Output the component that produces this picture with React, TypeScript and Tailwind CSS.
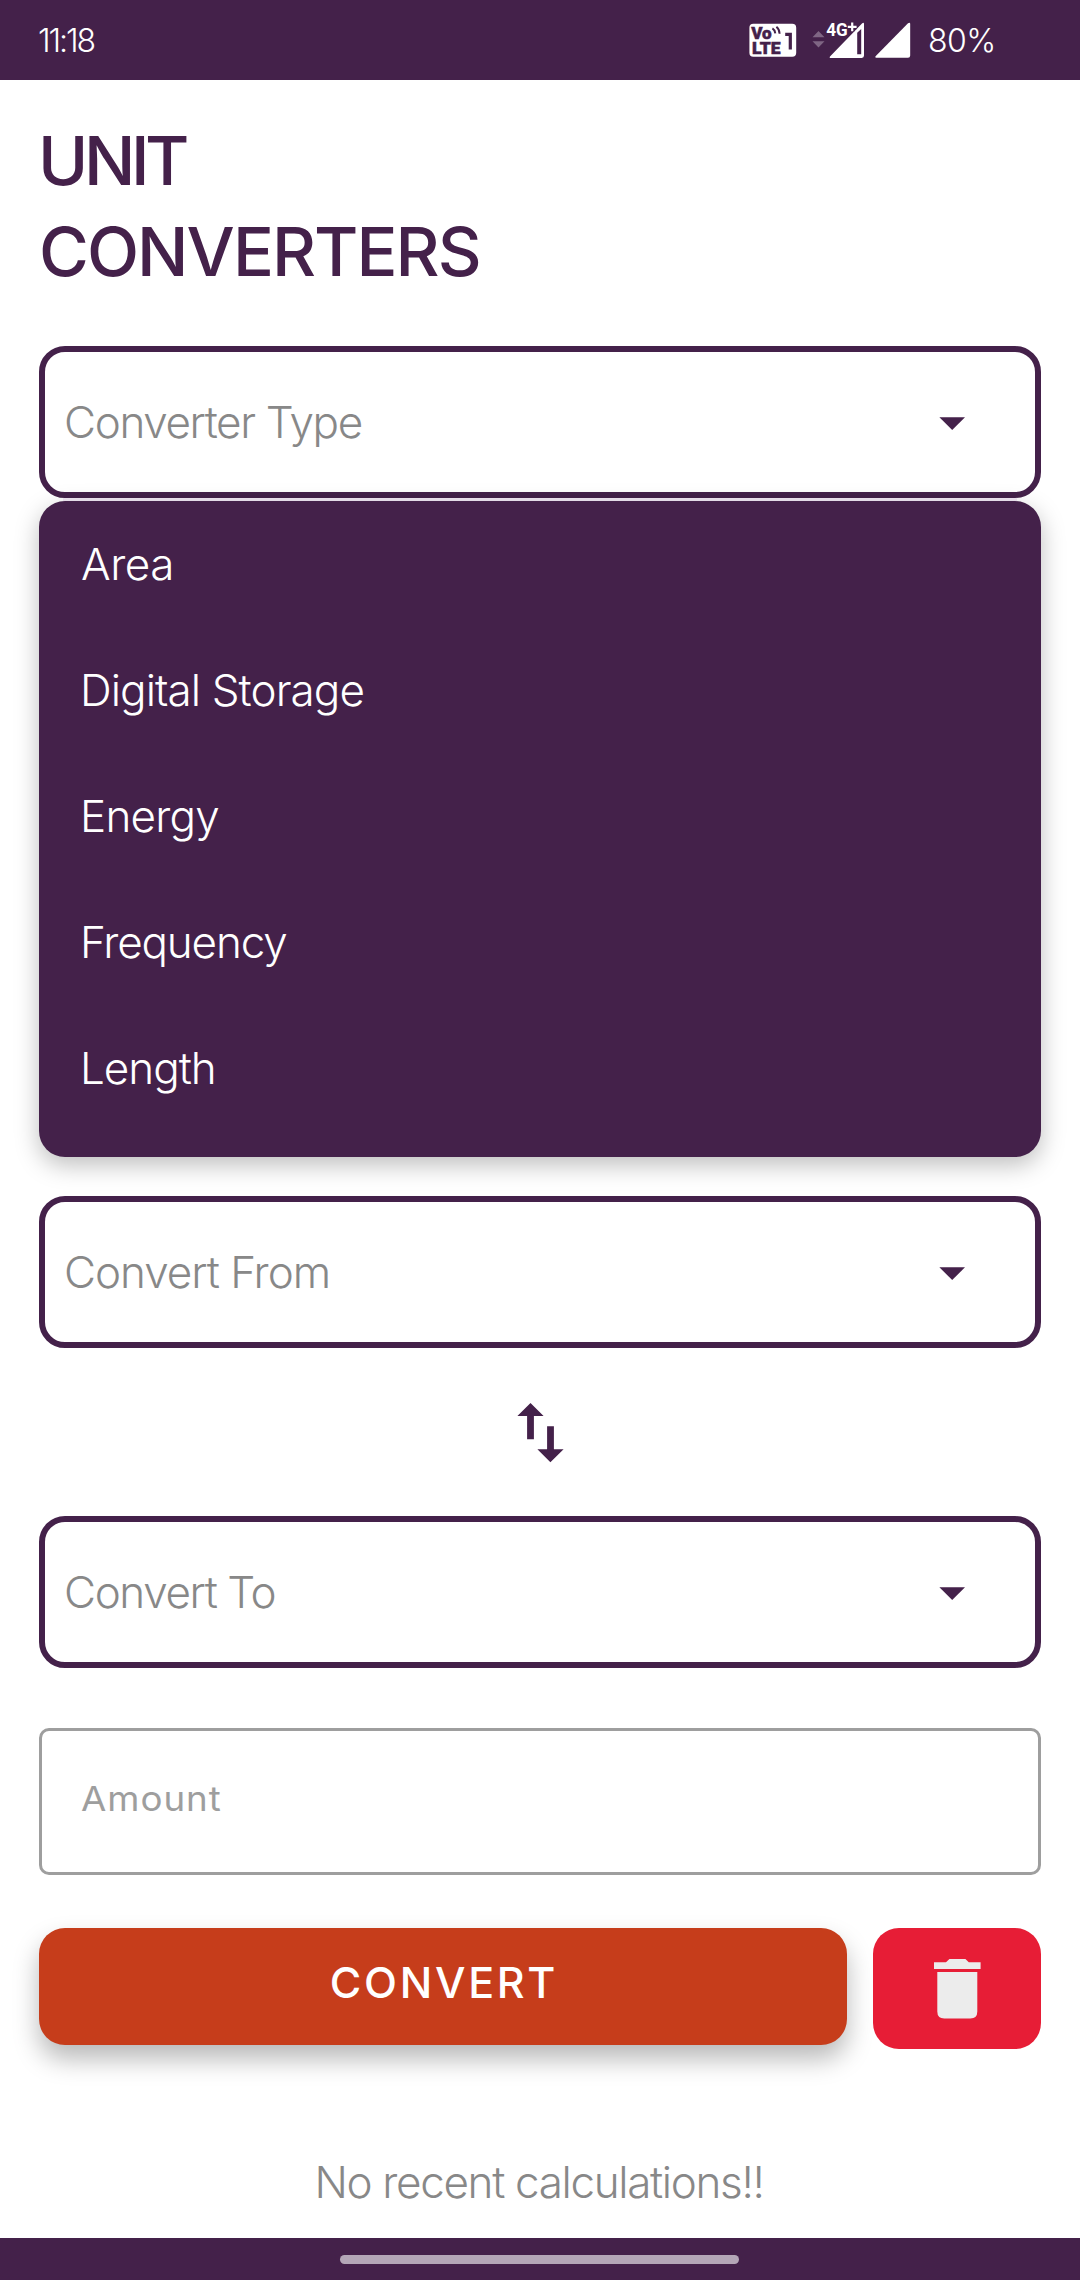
const converterTypes = [
  { label: "Area", spacing: "tracking-[-0.5px] pl-[42px]" },
  { label: "Digital Storage", spacing: "tracking-[-0.9px] pl-[41px]" },
  { label: "Energy", spacing: "tracking-[-0.8px] pl-[41px]" },
  { label: "Frequency", spacing: "tracking-[-1.15px] pl-[41px]" },
  { label: "Length", spacing: "tracking-[-1px] pl-[41px]" },
];

function VolteIcon() {
  return (
    <svg width="48" height="34" viewBox="0 0 48 34" className="shrink-0">
      <rect x="0.4" y="0.8" width="46.8" height="33" rx="4" fill="#fff" />
      <g fill="#44214a" stroke="#44214a" strokeWidth="0.5" fontFamily="Roboto, sans-serif" fontWeight="900">
        <text x="2.2" y="15.8" fontSize="16.5" textLength="20.5" lengthAdjust="spacingAndGlyphs">Vo</text>
        <text x="3" y="30.6" fontSize="17" textLength="28.6" lengthAdjust="spacingAndGlyphs">LTE</text>
      </g>
      <path d="M36.2 11.3 H41.3 V26.4" fill="none" stroke="#44214a" strokeWidth="3.2" />
      <path d="M23.4 5.4 q2.6 1.6 2.9 5 M27.4 3.8 q3 2.4 3.2 7" fill="none" stroke="#44214a" strokeWidth="2" />
    </svg>
  );
}

function MobileDataIcon() {
  return (
    <svg width="53" height="36" viewBox="0 0 53 36" className="shrink-0 overflow-visible">
      <path d="M0.5 15.2 L6.5 9 L12.5 15.2Z M0.5 19.2 H12.5 L6.5 25.6Z" fill="#7f6684" />
      <path
        fillRule="evenodd"
        d="M52 2 V33.6 Q52 36 49.8 36 H18.2 Q17 35.6 18 34.4 L50 1.4 Q52 0 52 2Z M45.2 10.8 V32.3 H49.2 V6.9Z"
        fill="#fff"
      />
      <path d="M40.2 0.4 V9.2 M35.8 4.8 H44.6" stroke="#44214a" strokeWidth="5" />
      <g fill="#fff" stroke="#44214a" strokeWidth="3" paintOrder="stroke" fontFamily="Roboto, sans-serif" fontWeight="700">
        <text x="14.3" y="14.2" fontSize="17.8" textLength="21.5" lengthAdjust="spacingAndGlyphs">4G</text>
      </g>
      <path d="M40.2 0.4 V9.2 M35.8 4.8 H44.6" stroke="#fff" strokeWidth="2.2" />
    </svg>
  );
}

function SignalIcon() {
  return (
    <svg width="36" height="36" viewBox="0 0 36 36" className="shrink-0">
      <path d="M35.2 2 V33.6 Q35.2 35.8 33 35.8 H1.2 Q-0.4 35.4 0.8 34 L33 1.2 Q35.2 0 35.2 2Z" fill="#fff" />
    </svg>
  );
}

function Select({ label, spacing }: { label: string; spacing: string }) {
  return (
    <button
      type="button"
      className="flex h-[152px] w-full shrink-0 items-center justify-between rounded-[26px] border-6 border-[#44214a] bg-white pr-[69px] pl-[19px]"
    >
      <span className={`text-[44px] leading-none font-light whitespace-nowrap text-[#888888] ${spacing}`}>{label}</span>
      <svg width="28" height="14" viewBox="0 0 28 14" className="mt-[3px]">
        <path d="M1.4 0.3 H27 L14.2 13.1Z" fill="#44214a" />
      </svg>
    </button>
  );
}

export default function App() {
  return (
    <div className="flex h-[2280px] w-[1080px] flex-col overflow-hidden bg-white font-['Inter',sans-serif]">
      <header className="flex h-20 shrink-0 items-center justify-between bg-[#44214a] pr-[84px] pl-[38px] text-[32px] leading-none font-light text-white">
        <span className="pt-[2px] tracking-[-2.1px]">11:18</span>
        <div className="flex items-center">
          <VolteIcon />
          <div className="w-[15px]" />
          <MobileDataIcon />
          <div className="w-[10px]" />
          <SignalIcon />
          <span className="w-[85px] pt-[2px] pl-[17px] tracking-[-0.5px] whitespace-nowrap">80%</span>
        </div>
      </header>

      <main className="flex grow flex-col px-[39px] pt-[35px]">
        <h1 className="text-[68px] leading-[91px] font-medium text-[#44214a]">
          <span className="-ml-px block tracking-[-4.4px]">UNIT</span>
          <span className="block tracking-[-1.94px]">CONVERTERS</span>
        </h1>

        <div className="mt-[49px] flex flex-col">
          <Select label="Converter Type" spacing="tracking-[-1.37px]" />
          <div className="mx-6 h-[3px] bg-[#f3e9f6]" />
          <ul className="h-[656px] rounded-[26px] bg-[#44214a] shadow-[0_8px_24px_rgba(0,0,0,0.26)]">
            {converterTypes.map((item) => (
              <li key={item.label} className={`flex h-[126px] items-center text-[44px] leading-none font-light text-white ${item.spacing}`}>
                {item.label}
              </li>
            ))}
          </ul>
        </div>

        <div className="relative mt-[39px] flex flex-col items-center">
          <Select label="Convert From" spacing="tracking-[-1.02px]" />
          <svg width="48" height="60" viewBox="0 0 48 60" className="mt-[55px] mb-[53px]" fill="#44214a">
            <path d="M14.5 0 L27.6 13 H17.9 V36.2 H11.1 V13 H1.4Z M31.1 23.2 H37.9 V46.2 H47.6 L34.4 59.2 L21.4 46.2 H31.1Z" />
          </svg>
          <Select label="Convert To" spacing="tracking-[-1.38px]" />
        </div>

        <div className="mt-[60px] flex h-[147px] shrink-0 items-center rounded-[10px] border-3 border-[#9e9e9e] pb-[6px] pl-[39px] text-[34px] leading-none text-[#9e9e9e]">
          <span className="origin-left scale-x-108 tracking-[0.9px]">Amount</span>
        </div>

        <div className="mt-[53px] flex items-start gap-[26px]">
          <button
            type="button"
            className="flex h-[117px] w-[808px] items-center justify-center rounded-[26px] bg-[#c63d1b] pb-2 pl-[2px] text-[43px] leading-none font-medium tracking-[2.7px] text-white shadow-[0_14px_26px_rgba(0,0,0,0.28)]"
          >
            CONVERT
          </button>
          <button type="button" aria-label="Delete" className="flex h-[121px] w-[168px] items-center justify-center rounded-[26px] bg-[#e71d36]">
            <svg width="48" height="60" viewBox="0 0 48 60" fill="#ececec">
              <path d="M1 3.2 H13 L16.4 0 H32.4 L35.8 3.2 H47.6 V10 H1Z M4.3 13 H44.3 V52.6 Q44.3 59.6 37.3 59.6 H11.3 Q4.3 59.6 4.3 52.6Z" />
            </svg>
          </button>
        </div>

        <p className="mt-[107px] pr-[2px] text-center text-[44px] leading-[52px] font-light tracking-[-1.34px] text-[#888888]">
          No recent calculations!!
        </p>
      </main>

      <footer className="flex h-[42px] shrink-0 justify-center bg-[#44214a] pt-[17px] pr-px">
        <div className="h-[9px] w-[399px] rounded-full bg-[#b4a6b7]" />
      </footer>
    </div>
  );
}
